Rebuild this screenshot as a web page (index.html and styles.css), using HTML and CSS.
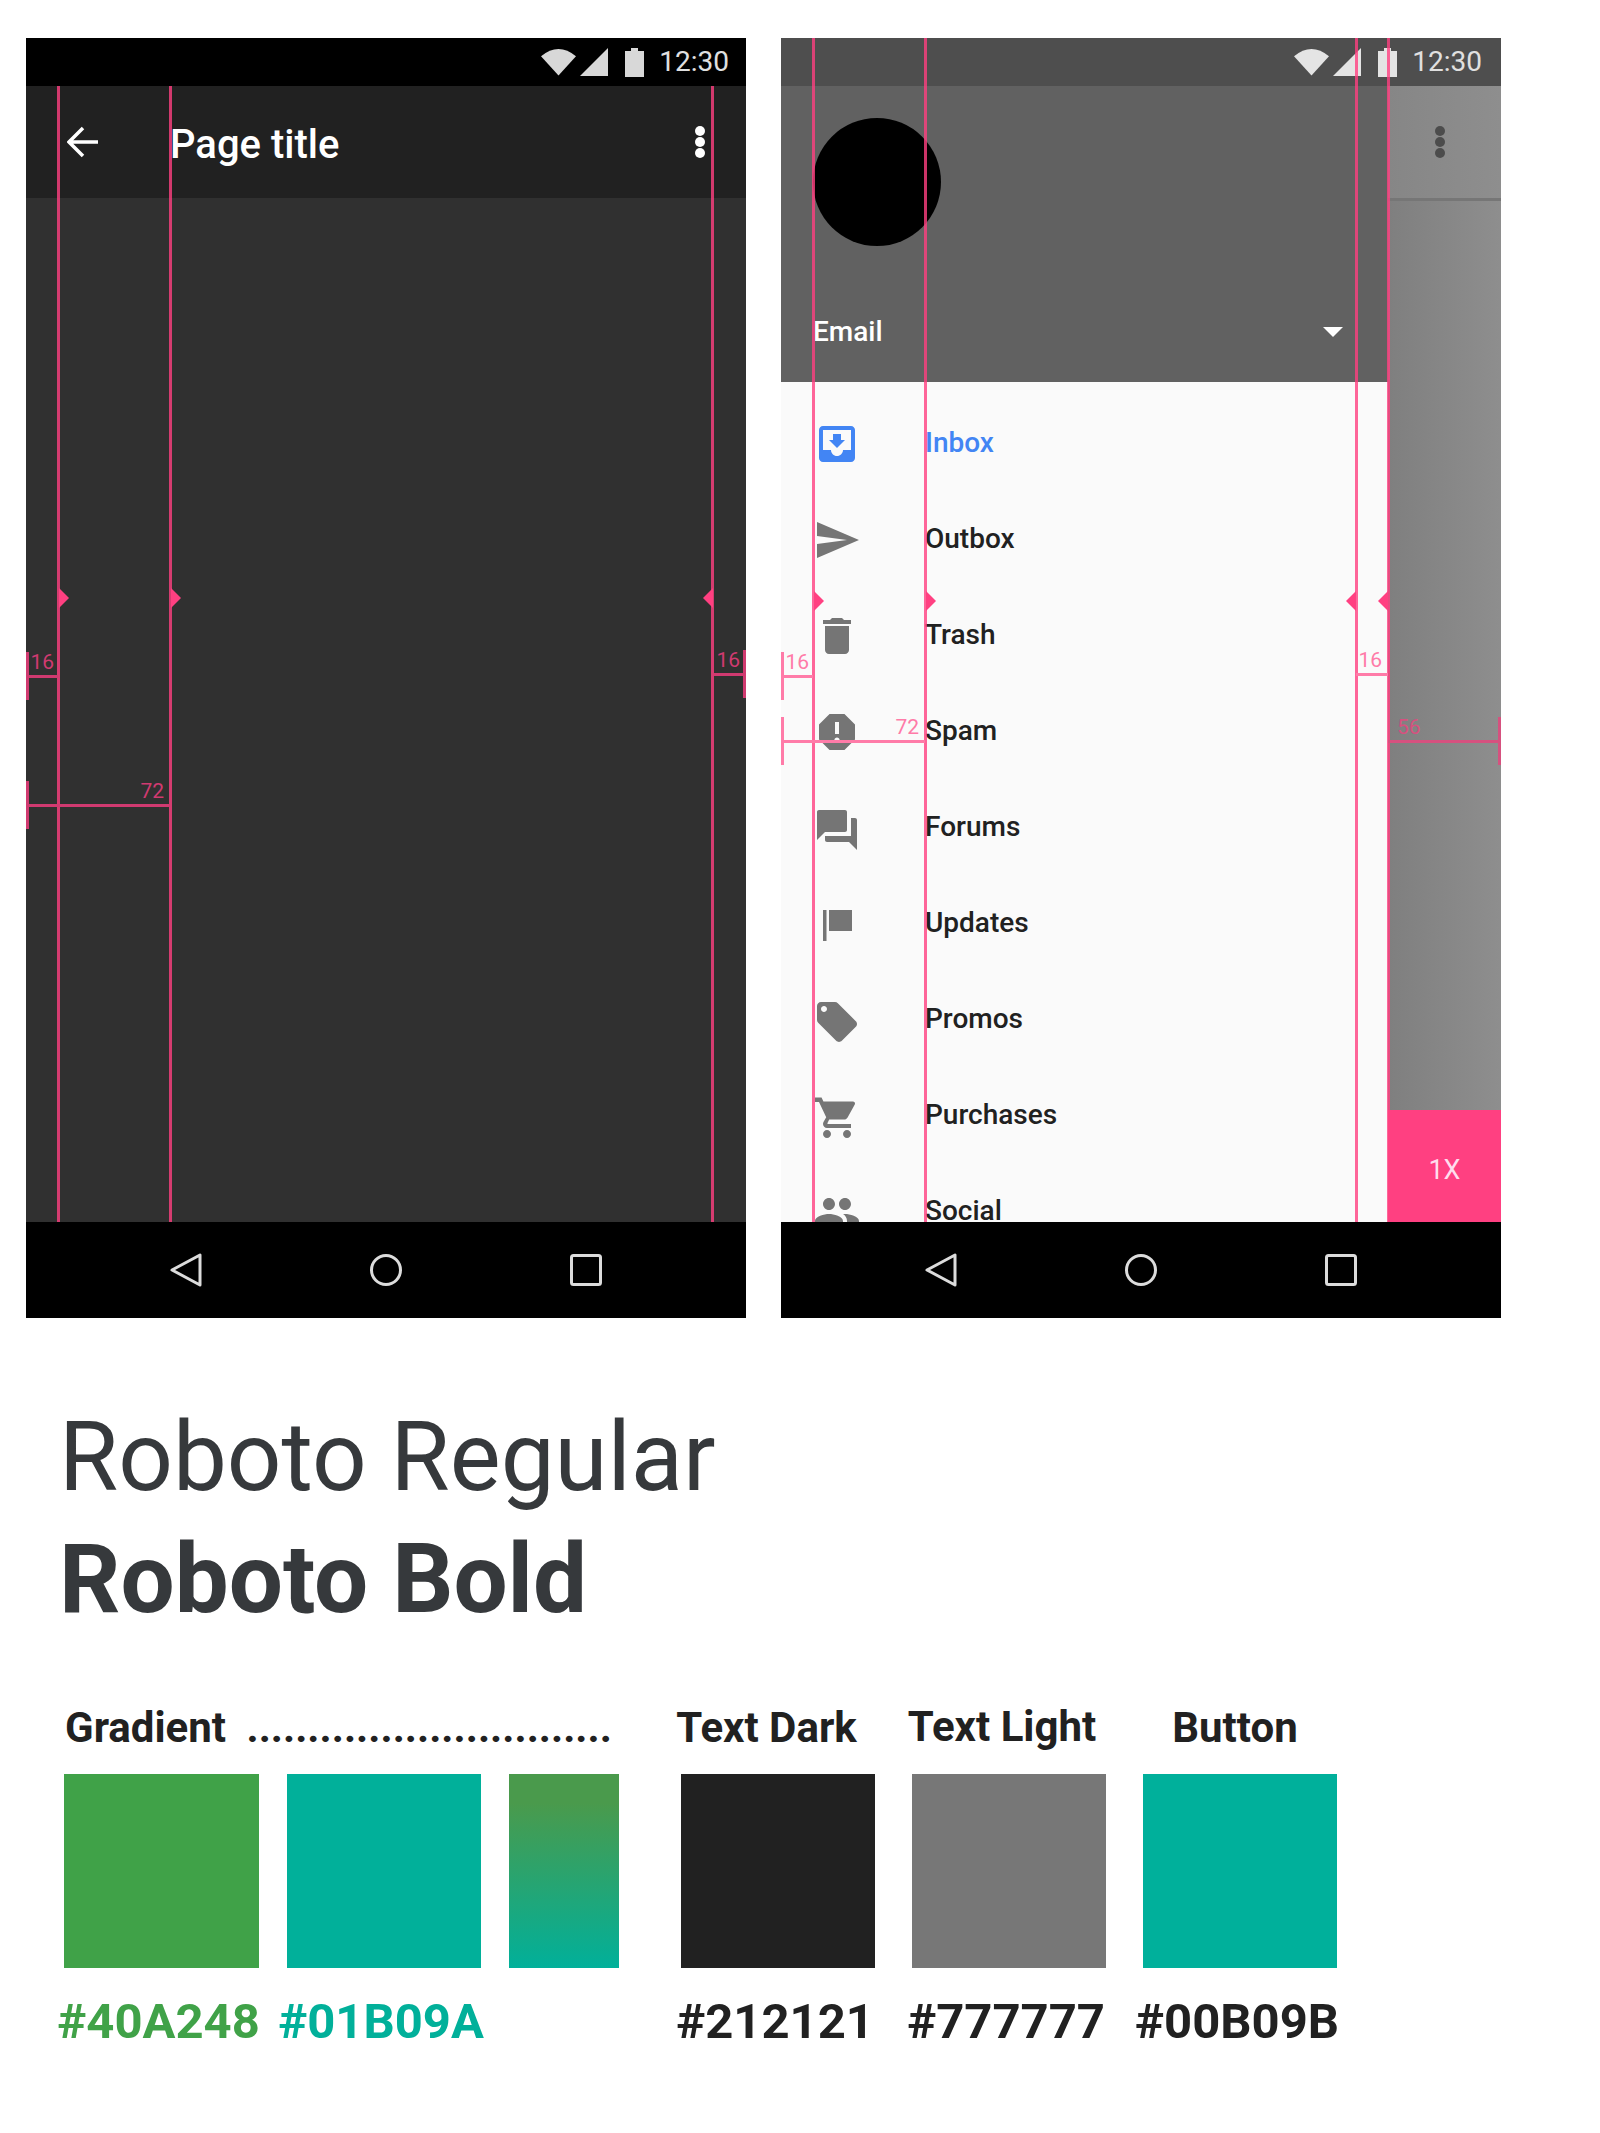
FILE: index.html
```html
<!DOCTYPE html>
<html lang="en">
  <head>
    <meta charset="UTF-8" />
    <meta name="viewport" content="width=device-width, initial-scale=1.0" />
    <title>Style Guide</title>
    <link rel="stylesheet" href="styles.css">
  </head>
  <body>
    <div class="phones">
      <!-- Page layout -->
      <section class="phone phone-page">
        <div class="status-bar">
          <svg class="ic-wifi" viewBox="0 0 36 28"><path d="M0 8 Q18 -7 36 8 L18 28Z" /></svg>
          <svg class="ic-signal" viewBox="0 0 28 28"><path d="M28 0V28H0Z" /></svg>
          <svg class="ic-battery" viewBox="0 0 19 29"><path d="M6 0H13V3H19V29H0V3H6Z" /></svg>
          <span class="clock">12:30</span>
        </div>
        <div class="toolbar">
          <svg class="ic-back" viewBox="0 0 32 32"><path d="M31 16H3M16 2L2 16l14 14" /></svg>
          <h1 class="page-title">Page title</h1>
          <div class="more"><i></i><i></i><i></i></div>
        </div>
        <div class="page-body"></div>
        <div class="nav-bar">
          <svg class="nav-icon" viewBox="0 0 36 36"><path d="M32 3V33L4 18Z" /></svg>
          <svg class="nav-icon" viewBox="0 0 36 36"><circle cx="18" cy="18" r="14.5" /></svg>
          <svg class="nav-icon" viewBox="0 0 36 36"><rect x="3.5" y="3.5" width="29" height="29" rx="2" /></svg>
        </div>

        <div class="guide guide-page g-32"></div>
        <div class="guide guide-page g-144"></div>
        <div class="guide guide-page g-686"></div>
        <div class="arrow arrow-r at-32"></div>
        <div class="arrow arrow-r at-144"></div>
        <div class="arrow arrow-l at-686"></div>
        <div class="dim dim-dark dim-a"><span class="dim-label">16</span></div>
        <div class="dim dim-dark dim-b"><span class="dim-label">72</span></div>
        <div class="dim dim-dark dim-c tick-end"><span class="dim-label">16</span></div>
      </section>

      <!-- Navigation drawer -->
      <section class="phone phone-drawer">
        <div class="status-bar status-dim">
          <svg class="ic-wifi" viewBox="0 0 36 28"><path d="M0 8 Q18 -7 36 8 L18 28Z" /></svg>
          <svg class="ic-signal" viewBox="0 0 28 28"><path d="M28 0V28H0Z" /></svg>
          <svg class="ic-battery" viewBox="0 0 19 29"><path d="M6 0H13V3H19V29H0V3H6Z" /></svg>
          <span class="clock">12:30</span>
        </div>
        <div class="drawer-wrap">
          <div class="drawer">
            <div class="drawer-head">
              <div class="avatar"></div>
              <div class="account">
                <span>Email</span>
                <div class="caret"></div>
              </div>
            </div>
            <ul class="menu">
              <li class="active">
                <svg viewBox="0 0 24 24"><path d="M19 3H4.99c-1.11 0-1.98.9-1.98 2L3 19c0 1.1.88 2 1.99 2H19c1.1 0 2-.9 2-2V5c0-1.1-.9-2-2-2zm0 12h-4c0 1.66-1.35 3-3 3s-3-1.34-3-3H4.99V5H19v10zm-3-5h-2V7h-4v3H8l4 4 4-4z" /></svg>
                <span>Inbox</span>
              </li>
              <li>
                <svg viewBox="0 0 24 24"><path d="M2.01 21L23 12 2.01 3 2 10l15 2-15 2z" /></svg>
                <span>Outbox</span>
              </li>
              <li>
                <svg viewBox="0 0 24 24"><path d="M6 19c0 1.1.9 2 2 2h8c1.1 0 2-.9 2-2V7H6v12zM19 4h-3.5l-1-1h-5l-1 1H5v2h14V4z" /></svg>
                <span>Trash</span>
              </li>
              <li>
                <svg viewBox="0 0 24 24"><path d="M15.73 3H8.27L3 8.27v7.46L8.27 21h7.46L21 15.73V8.27L15.73 3zM12 17.3c-.72 0-1.3-.58-1.3-1.3 0-.72.58-1.3 1.3-1.3.72 0 1.3.58 1.3 1.3 0 .72-.58 1.3-1.3 1.3zm1-4.3h-2V7h2v6z" /></svg>
                <span>Spam</span>
              </li>
              <li>
                <svg class="icon-low" viewBox="0 0 24 24"><path d="M21 6h-2v9H6v2c0 .55.45 1 1 1h11l4 4V7c0-.55-.45-1-1-1zm-4 6V3c0-.55-.45-1-1-1H3c-.55 0-1 .45-1 1v14l4-4h10c.55 0 1-.45 1-1z" /></svg>
                <span>Forums</span>
              </li>
              <li>
                <svg viewBox="0 0 48 48"><rect x="10" y="10" width="3.5" height="31" /><rect x="16" y="10" width="23" height="21" /></svg>
                <span>Updates</span>
              </li>
              <li>
                <svg class="icon-low" viewBox="0 0 24 24"><path d="M21.41 11.58l-9-9C12.05 2.22 11.55 2 11 2H4c-1.1 0-2 .9-2 2v7c0 .55.22 1.05.59 1.42l9 9c.36.36.86.58 1.41.58.55 0 1.05-.22 1.41-.59l7-7c.37-.36.59-.86.59-1.41 0-.55-.23-1.06-.59-1.42zM5.5 7C4.67 7 4 6.33 4 5.5S4.67 4 5.5 4 7 4.67 7 5.5 6.33 7 5.5 7z" /></svg>
                <span>Promos</span>
              </li>
              <li>
                <svg class="icon-low" viewBox="0 0 24 24"><path d="M7 18c-1.1 0-1.99.9-1.99 2S5.9 22 7 22s2-.9 2-2-.9-2-2-2zM1 2v2h2l3.6 7.59-1.35 2.45c-.16.28-.25.61-.25.96 0 1.1.9 2 2 2h12v-2H7.42c-.14 0-.25-.11-.25-.25l.03-.12.9-1.83h7.45c.75 0 1.41-.41 1.75-1.03l3.58-6.49c.08-.14.12-.31.12-.48 0-.55-.45-1-1-1H5.21l-.94-2H1zm16 16c-1.1 0-1.99.9-1.99 2s.89 2 1.99 2 2-.9 2-2-.9-2-2-2z" /></svg>
                <span>Purchases</span>
              </li>
              <li>
                <svg viewBox="0 0 24 24"><path d="M16 11c1.66 0 2.99-1.34 2.99-3S17.66 5 16 5c-1.66 0-3 1.34-3 3s1.34 3 3 3zm-8 0c1.66 0 2.99-1.34 2.99-3S9.66 5 8 5C6.34 5 5 6.34 5 8s1.34 3 3 3zm0 2c-2.33 0-7 1.17-7 3.5V19h14v-2.5c0-2.33-4.67-3.5-7-3.5zm8 0c-.29 0-.62.02-.97.05 1.16.84 1.97 1.97 1.97 3.45V19h6v-2.5c0-2.33-4.67-3.5-7-3.5z" /></svg>
                <span>Social</span>
              </li>
            </ul>
          </div>
          <div class="scrim">
            <div class="scrim-bar">
              <div class="more more-dim"><i></i><i></i><i></i></div>
            </div>
            <div class="scrim-fill"></div>
            <div class="scale-tag">1X</div>
          </div>
        </div>
        <div class="nav-bar">
          <svg class="nav-icon" viewBox="0 0 36 36"><path d="M32 3V33L4 18Z" /></svg>
          <svg class="nav-icon" viewBox="0 0 36 36"><circle cx="18" cy="18" r="14.5" /></svg>
          <svg class="nav-icon" viewBox="0 0 36 36"><rect x="3.5" y="3.5" width="29" height="29" rx="2" /></svg>
        </div>

        <div class="guide guide-drawer g-32"></div>
        <div class="guide guide-drawer g-144"></div>
        <div class="guide guide-drawer g-575"></div>
        <div class="guide guide-drawer g-607"></div>
        <div class="arrow arrow-r at-32 arrow-low"></div>
        <div class="arrow arrow-r at-144 arrow-low"></div>
        <div class="arrow arrow-l at-575 arrow-low"></div>
        <div class="arrow arrow-l at-607 arrow-low"></div>
        <div class="dim dim-light dim-a"><span class="dim-label">16</span></div>
        <div class="dim dim-light dim-d"><span class="dim-label">72</span></div>
        <div class="dim dim-light dim-e no-tick"><span class="dim-label">16</span></div>
        <div class="dim dim-scrim dim-f tick-end"><span class="dim-label">56</span></div>
      </section>
    </div>

    <div class="fonts">
      <p class="font-regular">Roboto Regular</p>
      <p class="font-bold">Roboto Bold</p>
    </div>

    <div class="palette">
      <div class="group group-gradient">
        <div class="label label-wide">Gradient <span class="dots">..............................</span></div>
        <div class="swatch c-green"></div>
        <div class="swatch c-teal"></div>
        <div class="swatch c-blend"></div>
        <div class="code text-green">#40A248</div>
        <div class="code text-teal">#01B09A</div>
      </div>
      <div class="group group-text">
        <div class="label shift-a">Text Dark</div>
        <div class="label shift-b">Text Light</div>
        <div class="label shift-c">Button</div>
        <div class="swatch c-dark"></div>
        <div class="swatch c-grey"></div>
        <div class="swatch c-button"></div>
        <div class="code">#212121</div>
        <div class="code">#777777</div>
        <div class="code">#00B09B</div>
      </div>
    </div>
  </body>
</html>
```

FILE: styles.css
```css
* {
  box-sizing: border-box;
}

body {
  margin: 0;
  background: #fff;
  font-family: Roboto, Arial, sans-serif;
  height: 2133px;
  overflow: hidden;
}

.phones {
  display: flex;
  gap: 35px;
  padding: 38px 0 0 26px;
}

.phone {
  position: relative;
  width: 720px;
  height: 1280px;
  display: flex;
  flex-direction: column;
  overflow: hidden;
}

.status-bar {
  height: 48px;
  flex: none;
  background: #000;
  color: #e0e0e0;
  display: flex;
  align-items: center;
  justify-content: flex-end;
  padding-right: 17px;
}

.status-dim {
  background: #4e4e4e;
  padding-right: 19px;
}

.status-bar svg {
  fill: #d8d8d8;
  display: block;
}

.status-dim svg {
  fill: #e4e4e4;
}

.ic-wifi {
  width: 35px;
  height: 28px;
}

.ic-signal {
  width: 28px;
  height: 28px;
  margin-left: 4px;
}

.ic-battery {
  width: 19px;
  height: 29px;
  margin-left: 17px;
}

.clock {
  font-size: 28px;
  margin: 0 0 2px 15px;
}

.toolbar {
  height: 112px;
  flex: none;
  background: #212121;
  display: flex;
  align-items: center;
  padding: 0 41px 0 41px;
  color: #fff;
}

.ic-back {
  width: 32px;
  height: 32px;
  fill: none;
  stroke: #fff;
  stroke-width: 3.5;
}

.page-title {
  margin: 4px 0 0 71px;
  flex: 1;
  font-size: 40px;
  font-weight: 500;
}

.more {
  display: flex;
  flex-direction: column;
  gap: 1px;
}

.more i {
  display: block;
  width: 10px;
  height: 10px;
  border-radius: 50%;
  background: #fff;
}

.more-dim i {
  background: #4c4c4c;
}

.page-body {
  flex: 1;
  background: #303030;
}

.nav-bar {
  height: 96px;
  flex: none;
  background: #000;
  display: grid;
  grid-template-columns: repeat(3, 200px);
  justify-content: center;
  align-items: center;
  justify-items: center;
}

.nav-icon {
  width: 36px;
  height: 36px;
  fill: none;
  stroke: #dcdcdc;
  stroke-width: 3;
  stroke-linejoin: round;
}

/* drawer */
.drawer-wrap {
  flex: 1;
  min-height: 0;
  display: flex;
}

.drawer {
  width: 607px;
  background: #fafafa;
  overflow: hidden;
}

.drawer-head {
  height: 296px;
  background: #616161;
  padding: 32px 32px 0;
  color: #fff;
}

.avatar {
  width: 128px;
  height: 128px;
  border-radius: 50%;
  background: #000;
}

.account {
  display: flex;
  justify-content: space-between;
  align-items: center;
  margin-top: 69px;
  font-size: 28px;
  font-weight: 500;
  padding-right: 13px;
}

.caret {
  width: 0;
  height: 0;
  border-left: 10px solid transparent;
  border-right: 10px solid transparent;
  border-top: 10px solid #fff;
}

.menu {
  list-style: none;
  margin: 0;
  padding: 14px 0 0 32px;
}

.menu li {
  height: 96px;
  display: flex;
  align-items: center;
  gap: 64px;
  font-size: 28px;
  font-weight: 500;
  color: #212121;
}

.menu span {
  margin-bottom: 4px;
}

.menu svg {
  width: 48px;
  height: 48px;
  fill: #757575;
}

.menu .icon-low {
  margin-top: 3px;
}

.menu .active {
  color: #4285f4;
}

.menu .active svg {
  fill: #4285f4;
}

.scrim {
  flex: 1;
  display: flex;
  flex-direction: column;
}

.scrim-bar {
  height: 115px;
  background: linear-gradient(90deg, #868686, #8e8e8e);
  border-bottom: 3px solid #767676;
  display: flex;
  align-items: center;
  justify-content: center;
  padding-right: 9px;
}

.scrim-fill {
  flex: 1;
  background: linear-gradient(90deg, #7f7f7f, #8e8e8e);
}

.scale-tag {
  height: 112px;
  background: #ff4081;
  color: #fde;
  font-size: 27px;
  padding-top: 8px;
  display: flex;
  align-items: center;
  justify-content: center;
}

/* redline overlay */
.guide {
  position: absolute;
  width: 3px;
  background: rgba(255, 64, 129, 0.8);
}

.guide-page {
  top: 48px;
  bottom: 96px;
}

.guide-drawer {
  top: 0;
  bottom: 96px;
}

.g-32 { left: 31px; }
.g-144 { left: 143px; }
.g-575 { left: 574px; }
.g-607 { left: 606px; }
.g-686 { left: 685px; }

.arrow {
  position: absolute;
  top: 550px;
  width: 0;
  height: 0;
  border-top: 10px solid transparent;
  border-bottom: 10px solid transparent;
}

.arrow-low {
  top: 553px;
}

.arrow-r {
  border-left: 10px solid #ff4081;
}

.arrow-l {
  border-right: 10px solid #ff4081;
}

.arrow-r.at-32 { left: 33px; }
.arrow-r.at-144 { left: 145px; }
.arrow-l.at-575 { left: 565px; }
.arrow-l.at-607 { left: 597px; }
.arrow-l.at-686 { left: 677px; }

.dim {
  position: absolute;
  height: 3px;
  background: currentColor;
}

.dim::before {
  content: "";
  position: absolute;
  left: 0;
  top: -23px;
  width: 3px;
  height: 48px;
  background: currentColor;
}

.tick-end::before {
  left: auto;
  right: 0;
}

.no-tick::before {
  display: none;
}

.dim-label {
  position: absolute;
  right: 6px;
  bottom: 5px;
  font-size: 21px;
  line-height: 22px;
}

.dim-dark { color: #d03a70; }
.dim-light { color: #ff7ba8; }
.dim-scrim { color: #d6517f; }

.dim-a { left: 0; width: 32px; top: 637px; }
.dim-a .dim-label { right: 4px; }
.dim-b { left: 0; width: 144px; top: 766px; }
.dim-c { left: 688px; width: 32px; top: 635px; }
.dim-d { left: 0; width: 144px; top: 702px; }
.dim-e { left: 575px; width: 32px; top: 635px; }
.dim-f { left: 607px; width: 113px; top: 702px; }
.dim-f .dim-label { right: auto; left: 9px; }

/* fonts */
.fonts {
  margin: 78px 0 0 59px;
  color: #36393c;
  font-size: 96px;
  line-height: 122px;
}

.fonts p {
  margin: 0;
}

.font-bold {
  font-weight: 700;
}

/* palette */
.palette {
  display: flex;
  gap: 62px;
  margin: 64px 0 0 64px;
}

.group {
  display: grid;
  grid-template-rows: 46px 194px 48px;
  row-gap: 24px;
  justify-items: center;
}

.group-gradient {
  grid-template-columns: 195px 194px 110px;
  column-gap: 28px;
}

.group-text {
  grid-template-columns: repeat(3, 194px);
  column-gap: 37px;
}

.label {
  font-size: 42px;
  line-height: 46px;
  font-weight: 700;
  color: #212121;
  white-space: nowrap;
  margin-top: 1px;
}

.label-wide {
  grid-column: 1 / -1;
  justify-self: start;
  margin-left: 1px;
}

.dots {
  margin-left: 10px;
}

.shift-a { margin-right: 23px; }
.shift-b { margin-right: 14px; margin-top: 0; }
.shift-c { margin-right: 10px; }

.swatch {
  width: 100%;
  height: 194px;
}

.c-green { background: #40a248; }
.c-teal { background: #01b09a; }
.c-blend { background: linear-gradient(180deg, #4a9a4c 15%, #01b09a 100%); }
.c-dark { background: #212121; }
.c-grey { background: #777; }
.c-button { background: #00b09b; }

.code {
  font-size: 49px;
  line-height: 48px;
  font-weight: 700;
  color: #212121;
  white-space: nowrap;
  margin: 6px 6px 0 0;
}

.text-green { color: #40a248; }
.text-teal { color: #01b09a; }
```
